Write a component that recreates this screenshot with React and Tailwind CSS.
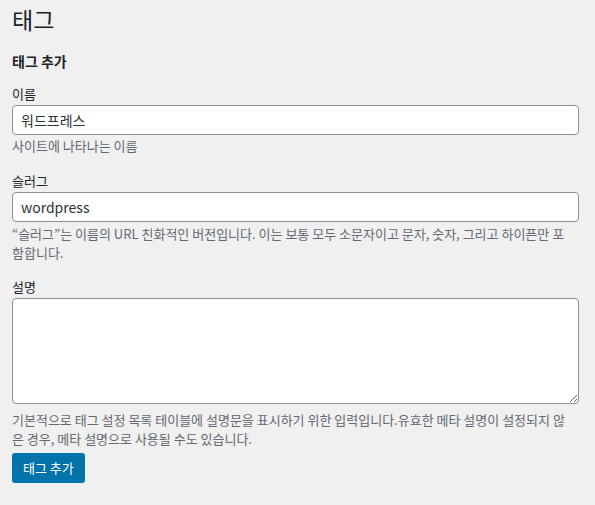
export default function App() {
  const font = { fontFamily: '"Noto Sans CJK KR", "Noto Sans", sans-serif' };
  return (
    <div className="min-h-[505px] bg-[#f0f0f1] pl-3 pr-4 text-[13px] text-[#1d2327]" style={font}>
      <h1 className="pt-[5px] text-[23px] leading-[29px] font-normal">태그</h1>
      <h2 className="mt-[17px] text-[14px] leading-[20px] font-bold">태그 추가</h2>

      {/* 이름 */}
      <div className="mt-[13px]">
        <label className="block leading-[19px]">이름</label>
        <input
          defaultValue="워드프레스"
          className="mt-[2px] block h-[30px] w-full rounded-[4px] border border-[#8c8f94] bg-white px-2 text-[14px] text-[#2c3338] outline-none"
        />
        <p className="mt-[1px] pr-[5px] leading-[19px] text-[#646970]">사이트에 나타나는 이름</p>
      </div>

      {/* 슬러그 */}
      <div className="mt-[16px]">
        <label className="block leading-[19px]">슬러그</label>
        <input
          defaultValue="wordpress"
          className="mt-[2px] block h-[30px] w-full rounded-[4px] border border-[#8c8f94] bg-white px-2 text-[14px] text-[#2c3338] outline-none"
        />
        <p className="mt-[2px] pr-[5px] leading-[19px] text-[#646970]">
          “슬러그”는 이름의 URL 친화적인 버전입니다. 이는 보통 모두 소문자이고 문자, 숫자, 그리고 하이픈만 포함합니다.
        </p>
      </div>

      {/* 설명 */}
      <div className="mt-[15px]">
        <label className="block leading-[19px]">설명</label>
        <textarea
          rows={5}
          className="mt-[2px] block h-[106px] w-full rounded-[4px] border border-[#8c8f94] bg-white px-2 text-[14px] outline-none"
        />
        <p className="mt-[6px] pr-[5px] leading-[19px] text-[#646970]">
          기본적으로 태그 설정 목록 테이블에 설명문을 표시하기 위한 입력입니다.유효한 메타 설명이 설정되지 않은 경우, 메타 설명으로 사용될 수도 있습니다.
        </p>
      </div>

      <button className="mt-[5px] h-[30px] rounded-[3px] bg-[#0073aa] px-[11px] text-[13px] text-white">
        태그 추가
      </button>
    </div>
  );
}
